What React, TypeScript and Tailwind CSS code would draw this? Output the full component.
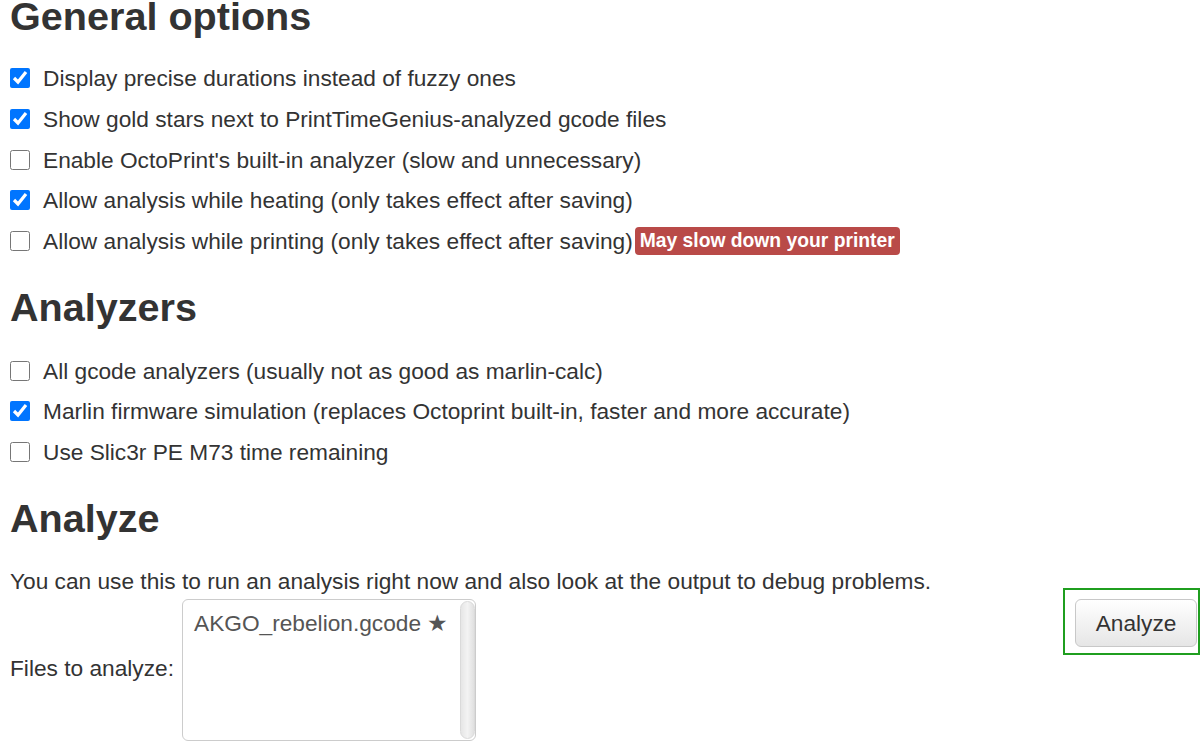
import React from 'react';

const generalOptions = [
  { label: 'Display precise durations instead of fuzzy ones', checked: true },
  { label: 'Show gold stars next to PrintTimeGenius-analyzed gcode files', checked: true },
  { label: "Enable OctoPrint's built-in analyzer (slow and unnecessary)", checked: false },
  { label: 'Allow analysis while heating (only takes effect after saving)', checked: true },
  { label: 'Allow analysis while printing (only takes effect after saving)', checked: false, warning: 'May slow down your printer' },
];

const analyzers = [
  { label: 'All gcode analyzers (usually not as good as marlin-calc)', checked: false },
  { label: 'Marlin firmware simulation (replaces Octoprint built-in, faster and more accurate)', checked: true },
  { label: 'Use Slic3r PE M73 time remaining', checked: false },
];

type Option = { label: string; checked: boolean; warning?: string };

const CheckRow = ({ option }: { option: Option }) => (
  <label className="flex items-center h-[40.7px]">
    <input
      type="checkbox"
      defaultChecked={option.checked}
      className="w-[20px] h-[20px] m-0 shrink-0"
    />
    <span className="ml-[13px]">{option.label}</span>
    {option.warning && (
      <span className="ml-[2px] bg-[#b94a48] text-white font-bold text-[19.3px] leading-[28px] px-[5px] rounded-[4px]">
        {option.warning}
      </span>
    )}
  </label>
);

const App = () => {
  return (
    <div className="w-[1200px] h-[750px] overflow-hidden bg-white pl-[10px] text-[#333] text-[22.7px] leading-[32px] font-['Liberation_Sans',Arial,sans-serif]">
      <h3 className="text-[39.6px] font-bold leading-[40px] mt-[-4px]">General options</h3>
      <div className="mt-[22px]">
        {generalOptions.map((o) => (
          <CheckRow key={o.label} option={o} />
        ))}
      </div>

      <h3 className="text-[39.6px] font-bold leading-[40px] mt-[26px]">Analyzers</h3>
      <div className="mt-[23px]">
        {analyzers.map((o) => (
          <CheckRow key={o.label} option={o} />
        ))}
      </div>

      <h3 className="text-[39.6px] font-bold leading-[40px] mt-[25px]">Analyze</h3>
      <p className="mt-[29px] leading-[28px]">
        You can use this to run an analysis right now and also look at the output to debug problems.
      </p>

      <div className="flex items-start justify-between mt-[-7px]">
        <div className="flex items-center mt-[11px]">
          <span className="w-[172px] pb-[4px]">Files to analyze:</span>
          <div className="relative w-[294px] h-[142px] border border-[#ccc] rounded-[6px] bg-white">
            <div className="pl-[11px] pt-[7px] text-[#555]">AKGO_rebelion.gcode ★</div>
            <div className="absolute right-[0px] top-[1px] bottom-[1px] w-[15px] rounded-full bg-gradient-to-r from-[#e6e6e6] via-[#f3f3f3] to-[#e0e0e0] border border-[#dadada]" />
          </div>
        </div>
        <div className="border-2 border-[#1f9e1f] pl-[10px] pr-[1px] pt-[9px] pb-[6px]">
          <button className="w-[122px] h-[48px] rounded-[6px] border border-[#c8c8c8] bg-gradient-to-b from-white to-[#e6e6e6] text-[#333] text-[22.7px]">
            Analyze
          </button>
        </div>
      </div>
    </div>
  );
};

export default App;
